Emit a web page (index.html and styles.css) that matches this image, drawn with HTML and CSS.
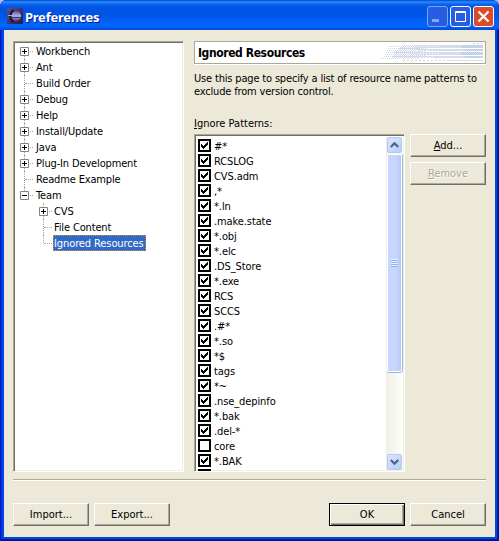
FILE: index.html
```
<!DOCTYPE html>
<html lang="en">
<head>
<meta charset="utf-8">
<title>Preferences</title>
<link rel="stylesheet" href="styles.css">
</head>
<body>
<svg class="defs" width="0" height="0">
  <symbol id="plus" viewBox="0 0 9 9"><path fill="#fff" stroke="#848478" d="M.5.5h8v8h-8z"/><path stroke="#000" d="M2 4.500h5M4.500 2v5"/></symbol>
  <symbol id="minus" viewBox="0 0 9 9"><path fill="#fff" stroke="#848478" d="M.5.5h8v8h-8z"/><path stroke="#000" d="M2 4.500h5"/></symbol>
  <symbol id="box" viewBox="0 0 13 13"><path fill="#fff" stroke="#000" stroke-width="2" d="M1 1h11v11H1z"/></symbol>
  <symbol id="check" viewBox="0 0 13 13"><path fill="#fff" stroke="#000" stroke-width="2" d="M1 1h11v11H1z"/><path d="M3 5h1v1h1v1h1v-1h1v-1h1v-1h1v-1h1v3h-1v1h-1v1h-1v1h-1v1h-1v-1h-1v-1h-1z"/></symbol>
</svg>
<div class="window">
  <header class="titlebar">
    <svg class="logo" width="16" height="16" viewBox="0 0 16 16"><defs><linearGradient id="lg" x2="1" y2="1"><stop stop-color="#5a4f8c"/><stop offset="1" stop-color="#251946"/></linearGradient><linearGradient id="orb" x2="0" y2="1"><stop stop-color="#5b549a"/><stop offset=".5" stop-color="#b4b2e4"/><stop offset="1" stop-color="#4a4288"/></linearGradient></defs><path fill="url(#lg)" d="M0 0h16v16H0z"/><circle cx="9" cy="8" r="5" fill="url(#orb)"/><path d="M6.500 2a7.500 7.500 0 0 0 0 12" fill="none" stroke="#191334" stroke-width="2"/><path stroke="#a5a5e0" d="M1 7.500h13"/><path stroke="#3a3478" d="M4 9.500h10"/></svg>
    <h1>Preferences</h1>
    <div class="controls">
      <svg width="21" height="21" viewBox="0 0 21 21"><rect x=".5" y=".5" width="20" height="20" rx="2.500" fill="#275de5" stroke="#7da5f1"/><path fill="#87a9f5" d="M5 13h7v3H5z"/></svg>
      <svg width="21" height="21" viewBox="0 0 21 21"><rect x=".5" y=".5" width="20" height="20" rx="2.500" fill="#275de5" stroke="#fff"/><path fill="none" stroke="#fff" d="M5.500 5.500h10v10h-10zM5 6.500h11"/></svg>
      <svg width="21" height="21" viewBox="0 0 21 21"><rect x=".5" y=".5" width="20" height="20" rx="2.500" fill="#dc4b27" stroke="#fff"/><path stroke="#fff" stroke-width="2.200" d="m5.500 5.500 10 10m0-10-10 10"/></svg>
    </div>
  </header>
  <main class="client">
    <div class="content">
      <ul class="tree sunken">
        <li><svg class="tw"><use href="#plus"/></svg><span>Workbench</span></li>
        <li><svg class="tw"><use href="#plus"/></svg><span>Ant</span></li>
        <li class="leaf"><span>Build Order</span></li>
        <li><svg class="tw"><use href="#plus"/></svg><span>Debug</span></li>
        <li><svg class="tw"><use href="#plus"/></svg><span>Help</span></li>
        <li><svg class="tw"><use href="#plus"/></svg><span>Install/Update</span></li>
        <li><svg class="tw"><use href="#plus"/></svg><span>Java</span></li>
        <li><svg class="tw"><use href="#plus"/></svg><span>Plug-In Development</span></li>
        <li class="leaf"><span>Readme Example</span></li>
        <li class="last"><svg class="tw"><use href="#minus"/></svg><span>Team</span></li>
        <li class="child"><svg class="tw"><use href="#plus"/></svg><span>CVS</span></li>
        <li class="child leaf"><span>File Content</span></li>
        <li class="child leaf last"><span class="selected">Ignored Resources</span></li>
      </ul>
      <section class="page">
        <div class="banner"><h2>Ignored Resources</h2>
          <svg width="104" height="21" viewBox="0 0 104 21" shape-rendering="crispEdges">
            <defs>
              <pattern id="d1" width="4" height="4" patternUnits="userSpaceOnUse"><path fill="#cfd8ea" d="M0 0h1v1H0zM2 0h1v1H2zM1 2h1v1H1zM3 2h1v1H3z"/></pattern>
              <pattern id="d2" width="2" height="2" patternUnits="userSpaceOnUse"><path fill="#cfd8ea" d="M0 0h1v1H0zM1 1h1v1H1z"/></pattern>
              <pattern id="d3" width="2" height="2" patternUnits="userSpaceOnUse"><path fill="#bac5df" d="M0 0h1v1H0zM1 1h1v1H1z"/></pattern>
            </defs>
            <path fill="url(#d1)" d="M8 4h30v13H0l4-6z"/>
            <path fill="url(#d2)" d="M20 3h25v13H10z"/>
            <path fill="#d5dceb" d="M34 3h68v3H34zM36 7h66v2H36zM34 10h68v3H34zM36 14h66v2H36z"/>
            <path stroke="#fff" stroke-dasharray="1 2" d="M36 4.500h22M36 8.500h16M36 11.500h22M36 15.500h16"/>
            <path fill="url(#d3)" d="M80 3h22v3H80zM84 7h18v2H84zM80 10h22v3H80zM84 14h18v2H84z"/>
            <path stroke="#cfd8ea" stroke-dasharray="2 2" d="M92 1.500h10M22 18.500h44"/>
            <path stroke="#d5dceb" d="M66 18.500h36"/>
          </svg>
        </div>
        <p><span>Use this page to specify a list of resource name patterns to</span><br><span>exclude from version control.</span></p>
        <div class="label"><span><u>I</u>gnore Patterns:</span></div>
        <div class="columns">
          <div class="list sunken">
            <ul class="items">
              <li><svg><use href="#check"/></svg><span>#*</span></li>
              <li><svg><use href="#check"/></svg><span>RCSLOG</span></li>
              <li><svg><use href="#check"/></svg><span>CVS.adm</span></li>
              <li><svg><use href="#check"/></svg><span>,*</span></li>
              <li><svg><use href="#check"/></svg><span>*.ln</span></li>
              <li><svg><use href="#check"/></svg><span>.make.state</span></li>
              <li><svg><use href="#check"/></svg><span>*.obj</span></li>
              <li><svg><use href="#check"/></svg><span>*.elc</span></li>
              <li><svg><use href="#check"/></svg><span>.DS_Store</span></li>
              <li><svg><use href="#check"/></svg><span>*.exe</span></li>
              <li><svg><use href="#check"/></svg><span>RCS</span></li>
              <li><svg><use href="#check"/></svg><span>SCCS</span></li>
              <li><svg><use href="#check"/></svg><span>.#*</span></li>
              <li><svg><use href="#check"/></svg><span>*.so</span></li>
              <li><svg><use href="#check"/></svg><span>*$</span></li>
              <li><svg><use href="#check"/></svg><span>tags</span></li>
              <li><svg><use href="#check"/></svg><span>*~</span></li>
              <li><svg><use href="#check"/></svg><span>.nse_depinfo</span></li>
              <li><svg><use href="#check"/></svg><span>*.bak</span></li>
              <li><svg><use href="#check"/></svg><span>.del-*</span></li>
              <li><svg><use href="#box"/></svg><span>core</span></li>
              <li><svg><use href="#check"/></svg><span>*.BAK</span></li>
              <li><svg><use href="#check"/></svg></li>
            </ul>
            <div class="scrollbar">
              <div class="arrow"><svg width="9" height="6" viewBox="0 0 9 6"><path d="m.8 5 3.700-3.700L8.200 5" fill="none" stroke="#4d6185" stroke-width="2.200"/></svg></div>
              <div class="thumb"><i></i></div>
              <div class="arrow down"><svg width="9" height="6" viewBox="0 0 9 6"><path d="m.8 1 3.700 3.700L8.200 1" fill="none" stroke="#4d6185" stroke-width="2.200"/></svg></div>
            </div>
          </div>
          <div class="side">
            <button><span><u>A</u>dd...</span></button>
            <button disabled><span><u>R</u>emove</span></button>
          </div>
        </div>
      </section>
    </div>
    <hr>
    <footer>
      <button><span>Import...</span></button>
      <button><span>Export...</span></button>
      <button class="default"><span>OK</span></button>
      <button><span>Cancel</span></button>
    </footer>
  </main>
</div>
</body>
</html>
```
FILE: styles.css
```
* { box-sizing: border-box; }
body { margin: 0; width: 499px; height: 541px; overflow: hidden; background: #a9bff0; color: #000; font: 11px/13px "DejaVu Sans Condensed", "DejaVu Sans", sans-serif; font-stretch: condensed; }
ul, h1, h2, p { margin: 0; padding: 0; list-style: none; }
.defs { position: absolute; }
span { white-space: nowrap; }
u { text-decoration: underline; text-underline-offset: 1px; text-decoration-thickness: 1px; }
.window { width: 499px; height: 541px; padding: 0 4px 4px; border-radius: 7px 7px 0 0; background: #0046e0; box-shadow: inset 1px 0 #0019cf, inset -1px -1px #00138c, inset -2px -2px #001ea0, inset 2px 0 #0831d9; }
.titlebar { height: 30px; margin: 0 -4px; padding: 0 5px 0 7px; display: flex; align-items: center; border-radius: 7px 7px 0 0; background: linear-gradient(#0048c8 0, #2a8aff 2px, #0c66ee 4px, #0055e5 7px, #0054e3 15px, #0061fa 21px, #0066ff 26px, #004bd5 30px); }
.titlebar h1 { margin: 3px 0 0 2px; color: #fff; font: bold 13px/16px "Noto Sans", sans-serif; letter-spacing: -.25px; text-shadow: 1px 1px #0a1883; }
.logo { margin-top: 2px; }
.controls { margin: 2px 0 0 auto; display: flex; gap: 2px; }
.client { height: 507px; padding: 11px 9px 0; background: #ece9d8; }
.content { display: flex; gap: 10px; height: 431px; }
.sunken { background: #fff; border: 1px solid; border-color: #aca899 #fff #fff #aca899; box-shadow: inset 1px 1px #716f64, inset -1px -1px #f1efe2; }
.tree { width: 171px; padding: 1px 2px; letter-spacing: -.15px; }
.tree li { height: 16px; display: flex; align-items: center; padding-left: 4px; position: relative; }
.tree li::before { content: ""; position: absolute; left: 8px; top: 0; height: 16px; border-left: 1px dotted #aca899; }
.tree li:first-child::before { top: 8px; height: 8px; }
.tree .last::before { height: 8px; }
.tree li::after { content: ""; position: absolute; left: 9px; top: 8px; width: 8px; border-top: 1px dotted #aca899; }
.tree .child { margin-left: 19px; }
.tw { width: 9px; height: 9px; margin-right: 7px; position: relative; z-index: 1; }
.tree .leaf { padding-left: 20px; }
.tree .child .tw { margin-right: 6px; }
.tree .child.leaf { padding-left: 19px; }
.tree .selected { margin-left: -1px; padding: 0 1px 0 0; height: 16px; line-height: 15px; letter-spacing: -.1px; background: #316ac5; color: #fff; border: 1px dotted #ce953a; }
.page { width: 292px; }
.banner { height: 23px; border: 1px solid #aca899; background: #fff; box-shadow: 0 1px #fff; display: flex; justify-content: space-between; align-items: center; padding-left: 3px; }
.banner h2 { font: bold 12px/14px "DejaVu Sans Condensed", sans-serif; font-stretch: condensed; letter-spacing: -.4px; }
.page p { margin-top: 8px; white-space: nowrap; letter-spacing: -.17px; }
.label { margin-top: 19px; height: 17px; }
.columns { display: flex; gap: 5px; height: 338px; }
.list { width: 211px; height: 338px; padding: 2px; display: flex; justify-content: space-between; overflow: hidden; }
.items { padding: 1px 0 0 1px; height: 334px; overflow: hidden; letter-spacing: -.1px; }
.items li { height: 15px; display: flex; align-items: flex-start; gap: 3px; line-height: 15px; }
.items svg { width: 13px; height: 13px; flex: none; margin-top: 1px; }
.items span { margin-top: 1px; }
.scrollbar { width: 17px; height: 333px; display: flex; flex-direction: column; background: linear-gradient(90deg, #f0efe6, #fefefb); margin-right: -1px; }
.arrow { width: 15px; height: 16px; margin: 0 1px; display: flex; align-items: center; justify-content: center; border: 1px solid #b4c8f6; border-radius: 2px; background: linear-gradient(135deg, #dbe5ff, #b9cdfb); }
.thumb { margin: 1px; height: 218px; border: 1px solid #fff; border-radius: 2px; box-shadow: 0 1px #9ab4e6, 1px 0 #9ab4e6; background: linear-gradient(90deg, #c8d6fb 60%, #b5cafa); display: flex; align-items: center; justify-content: center; }
.thumb i { width: 7px; height: 8px; background: repeating-linear-gradient(#eef4fe 0 1px, #8cb0f8 1px 2px); }
.down { margin-top: auto; }
button { width: 76px; height: 23px; padding: 0 0 1px; font: inherit; color: #000; background: #ece9d8; border: 1px solid; border-color: #fff #716f64 #716f64 #fff; box-shadow: inset -1px -1px #aca899; border-radius: 0; }
button:disabled { color: #aca899; text-shadow: 1px 1px #fff; }
.default { border-color: #000; box-shadow: inset 1px 1px #fff, inset -1px -1px #716f64, inset -2px -2px #aca899; }
.side { display: flex; flex-direction: column; gap: 5px; }
hr { margin: 7px 0 0; border: 0; height: 2px; background: linear-gradient(#aca899 50%, #fff 50%); }
footer { display: flex; gap: 5px; margin-top: 22px; }
footer .default { margin-left: auto; }
```
